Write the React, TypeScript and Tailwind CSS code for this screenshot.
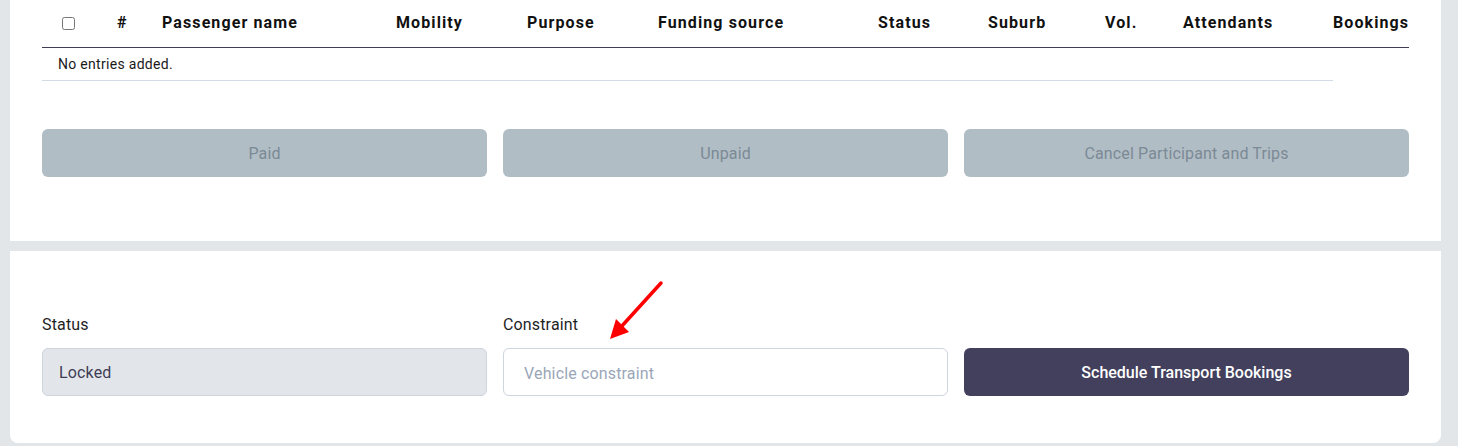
import React from 'react'

const columns = [
  { key: 'check', label: '' },
  { key: 'num', label: '#' },
  { key: 'name', label: 'Passenger name' },
  { key: 'mobility', label: 'Mobility' },
  { key: 'purpose', label: 'Purpose' },
  { key: 'funding', label: 'Funding source' },
  { key: 'status', label: 'Status' },
  { key: 'suburb', label: 'Suburb' },
  { key: 'vol', label: 'Vol.' },
  { key: 'attendants', label: 'Attendants' },
  { key: 'bookings', label: 'Bookings' },
]

const gridCols =
  'grid grid-cols-[75px_45px_234px_131px_131px_220px_110px_117px_78px_150px_76px]'

function PassengerTable() {
  return (
    <div className="w-[1367px]">
      {/* header */}
      <div className={`${gridCols} h-[48px] items-center border-b border-[#3f3d56] pb-[1px]`}>
        {columns.map((col) =>
          col.key === 'check' ? (
            <div key={col.key} className="pl-5 flex items-center">
              <input type="checkbox" className="w-[13px] h-[13px] m-0" />
            </div>
          ) : (
            <div key={col.key} className="text-[16px] font-bold tracking-[1.1px] text-[#111] whitespace-nowrap">
              {col.label}
            </div>
          )
        )}
      </div>
      {/* empty row */}
      <div className={gridCols}>
        <div className="col-span-10 h-[33px] flex items-center pl-4 pt-[1px] text-[14px] tracking-[0.3px] text-[#1a1a1a] border-b border-[#d3dce6]">
          No entries added.
        </div>
      </div>
    </div>
  )
}

function ActionButton({ children }: { children: React.ReactNode }) {
  return (
    <button
      disabled
      className="h-[48px] pt-[2px] rounded-md bg-[#b1bdc5] text-[16px] tracking-[0.15px] text-[#7b8a95] flex items-center justify-center"
    >
      {children}
    </button>
  )
}

function RedArrow() {
  return (
    <svg className="absolute left-[590px] top-[26px] w-[80px] h-[70px]" viewBox="0 0 80 70">
      <line x1="61" y1="6" x2="21" y2="50" stroke="#ff0000" strokeWidth="3.5" strokeLinecap="round" />
      <polygon points="10,62 29,55 16,42" fill="#ff0000" />
    </svg>
  )
}

export default function App() {
  return (
    <div
      className="w-[1458px] h-[446px] bg-[#e2e6e9] pl-[10px] pr-[17px] overflow-hidden"
      style={{ fontFamily: 'Roboto, "Liberation Sans", sans-serif' }}
    >
      {/* participants card */}
      <div className="bg-white h-[241px] px-[32px]">
        <PassengerTable />
        <div className="mt-[48px] grid grid-cols-3 gap-4">
          <ActionButton>Paid</ActionButton>
          <ActionButton>Unpaid</ActionButton>
          <ActionButton>Cancel Participant and Trips</ActionButton>
        </div>
      </div>

      {/* schedule card */}
      <div className="relative mt-[10px] bg-white h-[192px] rounded-b-lg px-[32px] pt-[62px]">
        <div className="grid grid-cols-3 gap-4 items-end">
          <div>
            <div className="text-[16px] leading-6 tracking-[0.15px] text-[#1f1f1f] mb-[11px]">Status</div>
            <div className="h-[48px] pt-[2px] rounded-md bg-[#e2e6ea] border border-[#cdd5df] flex items-center pl-4 text-[16px] tracking-[0.15px] text-[#3f3d56]">
              Locked
            </div>
          </div>
          <div>
            <div className="text-[16px] leading-6 tracking-[0.15px] text-[#1f1f1f] mb-[11px]">Constraint</div>
            <input
              placeholder="Vehicle constraint"
              className="w-full h-[48px] pt-[2px] rounded-md bg-white border border-[#cdd5df] pl-5 text-[16px] tracking-[0.15px] text-[#3f3d56] placeholder:text-[#9aa6b8] outline-none"
            />
          </div>
          <button className="h-[48px] pt-[2px] rounded-md bg-[#42405c] text-white text-[16px] font-medium flex items-center justify-center">
            Schedule Transport Bookings
          </button>
        </div>
        <RedArrow />
      </div>
    </div>
  )
}
